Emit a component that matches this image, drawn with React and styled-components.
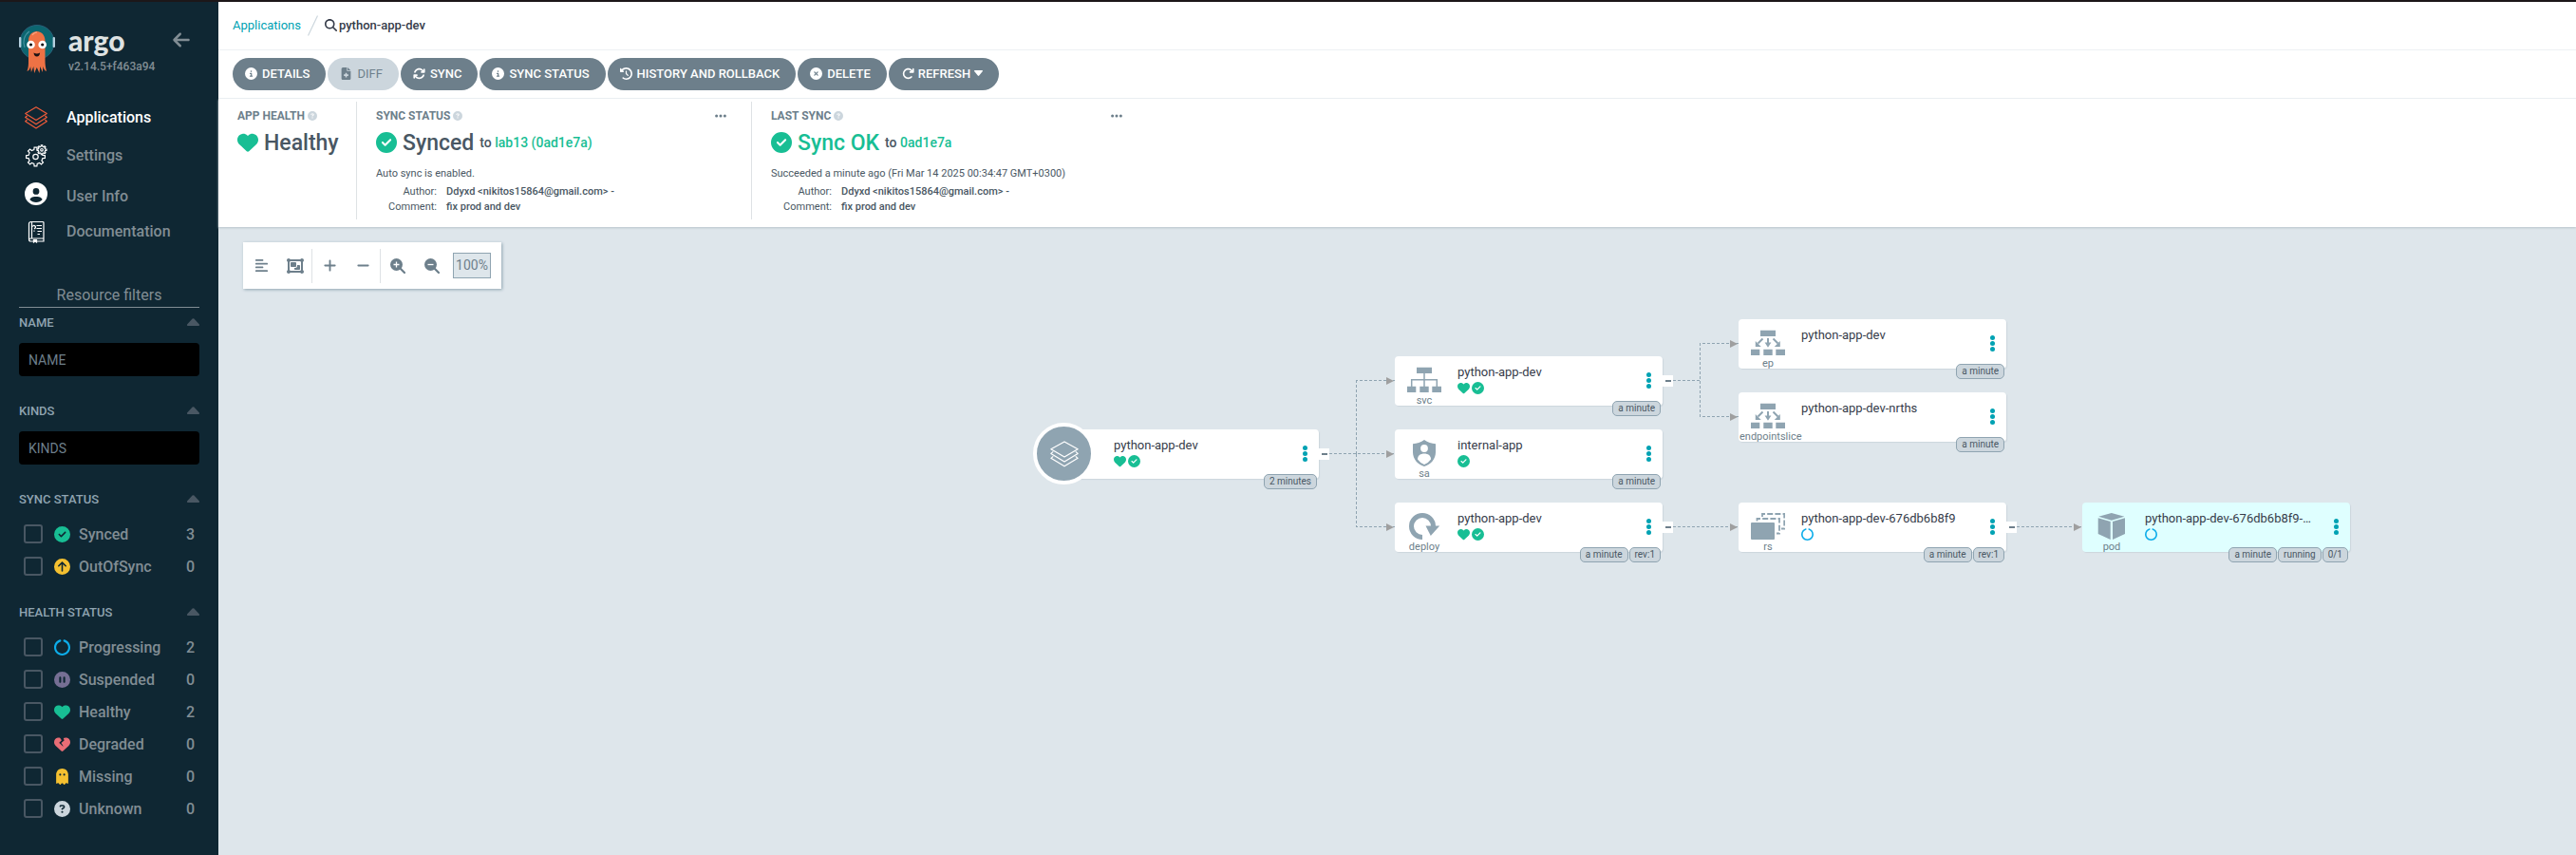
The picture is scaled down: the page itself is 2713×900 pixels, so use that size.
import React from 'react';
import styled, { createGlobalStyle, css } from 'styled-components';
import {
  FaAlignLeft,
  FaArrowLeft,
  FaArrowRotateRight,
  FaArrowsRotate,
  FaCircleArrowUp,
  FaCircleCheck,
  FaCircleInfo,
  FaCircleNotch,
  FaCirclePause,
  FaCircleQuestion,
  FaCircleUser,
  FaCircleXmark,
  FaClockRotateLeft,
  FaEllipsis,
  FaFileMedical,
  FaGhost,
  FaHeart,
  FaHeartCrack,
  FaMagnifyingGlass,
  FaMinus,
  FaObjectGroup,
  FaPlus,
} from 'react-icons/fa6';

const color = {
  navy: '#0f2733',
  canvas: '#dee6eb',
  slate: '#6d7f8b',
  steel: '#8fa4b1',
  mist: '#ccd6dd',
  ink: '#363c4a',
  text: '#495763',
  teal: '#00a2b3',
  green: '#18be94',
  amber: '#f4c030',
  red: '#e96d76',
  blue: '#0dadea',
  purple: '#766f94',
};

const GlobalStyle = createGlobalStyle`
  *, *::before, *::after { box-sizing: border-box; }
  body {
    margin: 0;
    font-family: Roboto, "Liberation Sans", sans-serif;
    font-size: 13px;
    color: ${color.text};
    background: ${color.canvas};
  }
  button { font: inherit; color: inherit; border: 0; padding: 0; background: none; cursor: pointer; }
  a { text-decoration: none; }
  svg { display: block; flex: none; }
`;

const Page = styled.div`
  display: flex;
  min-height: 100vh;
  border-top: 2px solid #1c1719;
`;

/* ---------- Sidebar ---------- */

const Sidebar = styled.aside`
  flex: none;
  width: 230px;
  padding: 0 20px;
  background: ${color.navy};
  color: #818d94;
`;

const Brand = styled.div`
  display: flex;
  align-items: flex-start;
  height: 102px;
  padding-top: 24px;
`;

const BrandText = styled.div`
  flex: 1;
  min-width: 0;
  margin-left: 14px;
`;

const Wordmark = styled.div`
  margin-bottom: 4px;
  font: 900 30px/32px Lato, Roboto, sans-serif;
  color: #dee2e2;
`;

const Version = styled.div`
  font-size: 12px;
  font-weight: 500;
  line-height: 16px;
`;

const CollapseButton = styled.button`
  margin: 6px 9px 0 0;
`;

const Nav = styled.nav`
  margin-bottom: 37px;
`;

const NavLink = styled.a`
  display: flex;
  align-items: ${(p) => (p.$low ? 'flex-end' : 'center')};
  gap: 20px;
  height: 40px;
  padding: 8px 0 8px 6px;
  font-size: 16px;
  line-height: 18px;
  font-weight: 500;
  color: ${(p) => (p.$active ? '#fff' : '#818d94')};

  svg { color: #fff; }
`;

const FiltersTitle = styled.h2`
  margin: 0 0 6px;
  padding-bottom: 2px;
  border-bottom: 1px solid #818d94;
  font-size: 16px;
  font-weight: 400;
  line-height: 20px;
  text-align: center;
`;

const FilterSection = styled.section`
  margin-bottom: ${(p) => (p.$list ? 22 : 27)}px;
`;

const FilterHead = styled.div`
  display: flex;
  align-items: center;
  justify-content: space-between;
  height: 18px;
  margin-bottom: ${(p) => (p.$list ? 11 : 13)}px;
  font-weight: 500;
  color: ${color.steel};
`;

const FilterInput = styled.input`
  display: block;
  width: 100%;
  height: 35px;
  padding: 0 10px;
  border: 0;
  border-radius: 4px;
  background: #000;
  color: #fff;
  font: 400 14px Roboto, sans-serif;

  &::placeholder { color: #6d7f8b; opacity: 1; }
`;

const FilterOption = styled.label`
  display: flex;
  align-items: center;
  height: 34px;
  padding: 0 5px;
  font-size: 16px;
  font-weight: 500;
`;

const Checkbox = styled.input`
  appearance: none;
  width: 20px;
  height: 20px;
  margin: 0 12px 0 0;
  border: 2px solid #495763;
  border-radius: 3px;
`;

const OptionName = styled.span`
  flex: 1;
  margin-left: 9px;
`;

/* ---------- Header ---------- */

const Main = styled.main`
  flex: 1;
  min-width: 0;
  display: flex;
  flex-direction: column;
`;

const TopBar = styled.header`
  display: flex;
  align-items: center;
  height: 51px;
  padding: 0 15px 1px;
  background: #fff;
  border-bottom: 1px solid #edf1f4;
`;

const Crumb = styled.a`
  color: ${color.teal};
`;

const CrumbCurrent = styled.span`
  display: flex;
  align-items: center;
  gap: 2px;
  margin-left: 7px;
  font-weight: 500;
  color: ${color.ink};
`;

const Slash = styled.svg`
  margin-left: 7px;
`;

const Toolbar = styled.div`
  display: flex;
  align-items: center;
  gap: 2px;
  height: 51px;
  padding: 0 15px;
  background: #fff;
  border-bottom: 1px solid #edf1f4;
`;

const ActionButton = styled.button`
  display: flex;
  align-items: center;
  gap: ${(p) => (p.$menu ? 4 : 5)}px;
  height: 34px;
  padding: ${(p) => (p.$menu ? '0 17px 2px 14px' : '0 17px 2px 13px')};
  border-radius: 17px;
  background: ${color.slate};
  color: #fff;
  font-weight: 500;

  &:disabled { background: ${color.mist}; color: ${color.slate}; font-weight: 400; }
`;

const StatusPanel = styled.section`
  position: relative;
  z-index: 1;
  display: flex;
  height: 135px;
  padding: 3px 0 8px;
  background: #fff;
  box-shadow: 0 1px 2px #b7c3cb;
`;

const StatusItem = styled.div`
  width: ${(p) => p.$width}px;
  padding: 6px 25px 0 20px;
  border-right: ${(p) => (p.$last ? '0' : '1px solid #dee2e5')};
`;

const StatusTitle = styled.div`
  display: flex;
  align-items: center;
  gap: 3px;
  height: 18px;
  font-size: 12px;
  font-weight: 700;
  color: ${color.slate};

  svg { color: ${color.mist}; }
`;

const MoreButton = styled.button`
  margin-left: auto;
  svg { color: ${color.slate}; }
`;

const StatusValue = styled.div`
  display: flex;
  align-items: center;
  height: 38px;
  gap: 6px;
  font-size: 23px;
  font-weight: 500;
  color: ${(p) => (p.$ok ? color.green : color.text)};

  svg { color: ${color.green}; }
`;

const Revision = styled.span`
  font-size: 14px;
  color: ${color.text};

  a { color: ${color.green}; }
`;

const StatusNote = styled.div`
  margin-top: 4px;
  font-size: 11px;
  line-height: 20px;
`;

const Commit = styled.dl`
  display: grid;
  grid-template-columns: 64px 1fr;
  column-gap: 10px;
  margin: 1px 0 0;
  font-size: 11px;
  line-height: 16px;

  dt { text-align: right; }
  dd { margin: 0; font-weight: 500; white-space: nowrap; }
`;

/* ---------- Resource graph ---------- */

const Canvas = styled.section`
  position: relative;
  flex: 1;
  min-height: 600px;
  margin-top: -1px;
  background: ${color.canvas};
`;

const GraphTools = styled.div`
  display: inline-flex;
  align-items: center;
  height: 49px;
  margin: 17px 0 0 26px;
  padding: 0 11px 0 1px;
  background: #fff;
  box-shadow: 1px 1px 3px ${color.steel};
  color: ${color.slate};
`;

const ToolButton = styled.button`
  display: flex;
  align-items: center;
  justify-content: center;
  width: 36px;
  height: 36px;
  ${(p) => p.$divided && css`border-right: 1px solid #dee2e5;`}
`;

const ZoomValue = styled.output`
  margin-left: 4px;
  width: 40px;
  height: 27px;
  border: 1px solid ${color.steel};
  background: ${color.canvas};
  font-size: 14px;
  line-height: 24px;
  text-align: center;
`;

const Edges = styled.svg`
  position: absolute;
  left: 0;
  top: 0;
  pointer-events: none;
`;

const Node = styled.article`
  position: absolute;
  left: ${(p) => p.$x}px;
  top: ${(p) => p.$y}px;
  display: flex;
  width: 282px;
  height: 52px;
  border-radius: 4px;
  background: ${(p) => (p.$highlight ? '#dfffff' : '#fff')};
  box-shadow: 1px 1px 1px ${color.mist};
`;

const KindColumn = styled.div`
  width: 60px;
  margin-left: 1px;
  padding-top: 11px;
  font-size: 11px;
  line-height: 13px;
  text-align: center;
  white-space: nowrap;
  color: ${color.slate};
`;

const KindDrawing = styled.svg`
  margin: 0 auto 1px;
  color: ${color.steel};
`;

const RootBadge = styled.div`
  position: absolute;
  left: -19px;
  top: -7px;
  display: flex;
  align-items: center;
  justify-content: center;
  width: 65px;
  height: 65px;
  border: 4px solid #fff;
  border-radius: 50%;
  background: ${color.steel};
  color: #fff;
`;

const NodeBody = styled.div`
  flex: 1;
  min-width: 0;
  margin-left: 5px;
  padding-top: 9px;
`;

const NodeName = styled.div`
  line-height: 16px;
  white-space: nowrap;
  color: ${color.ink};
`;

const NodeStatus = styled.div`
  display: flex;
  gap: 2px;
  margin-top: 2px;
  height: 13px;
`;

const KebabButton = styled.button`
  display: flex;
  flex-direction: column;
  align-items: center;
  gap: 1px;
  width: 29px;
  padding-top: 17px;
`;

const KebabDot = styled.span`
  width: 5px;
  height: 5px;
  border-radius: 50%;
  background: ${color.teal};
`;

const ExpandButton = styled.button`
  position: absolute;
  left: 100%;
  top: 20px;
  display: flex;
  align-items: center;
  justify-content: center;
  width: 11px;
  height: 12px;
  background: #fff;

  &::before {
    content: '';
    width: 6px;
    height: 2px;
    background: ${color.slate};
  }
`;

const Tags = styled.div`
  position: absolute;
  right: 2px;
  top: 47px;
  display: flex;
  gap: 1px;
`;

const Tag = styled.span`
  height: 16px;
  padding: 0 5px;
  border: 1px solid ${color.steel};
  border-radius: 5px;
  background: ${color.mist};
  font-size: 10px;
  line-height: 14px;
  white-space: nowrap;
`;

/* ---------- Drawings ---------- */

const ArgoMascot = () => (
  <svg width="38" height="51" viewBox="0 0 38 51">
    <circle cx="19" cy="18.500" r="18" fill="#0c6670" stroke="#2b5f79" strokeWidth="1" />
    <path d="M6 24a14 14 0 0 1 5-17" fill="none" stroke="#4592a0" strokeWidth="1.200" />
    <rect x="0" y="13" width="2.400" height="11" rx="1" fill="#b5cfdf" />
    <rect x="35.600" y="13" width="2.400" height="11" rx="1" fill="#b5cfdf" />
    <path
      d="M10 17C10 3.500 27.500 3.500 27.500 17V38c0 4 .5 7 1.500 11-2.500-.5-3-3-3.500-5l-.8 6-2.400-6-.8 7-2.700-6-2.700 6-.8-7-2.400 6-.8-6c-.5 2.500-1.500 4.500-3.600 5 1.500-4 1.500-7 1.500-11z"
      fill="#ee7245"
    />
    <path d="M14 11q2-3 5-3" fill="none" stroke="#f7a583" strokeWidth="1.200" />
    <circle cx="12.500" cy="21" r="4.300" fill="#fff" />
    <circle cx="24.700" cy="21" r="4.300" fill="#fff" />
    <circle cx="12.500" cy="21" r="1.600" fill="#111" />
    <circle cx="24.700" cy="21" r="1.600" fill="#111" />
    <path d="M15.500 29.500q3.300 2 6.600 0-.4 4-3.300 4t-3.300-4z" fill="#1c1214" />
  </svg>
);

const LayersIcon = ({ width = 24, height = 24, stroke = 'currentColor', weight = 1.2 }) => (
  <svg width={width} height={height} viewBox="0 0 24 24" fill="none" stroke={stroke} strokeWidth={weight} strokeLinejoin="round" preserveAspectRatio="none">
    <path d="M12 .800 23.300 7.500 12 14.500 .700 7.500z" />
    <path d="M2.600 9.800.700 11.500 12 18.800l11.300-7.300-1.900-1.700" />
    <path d="M2.600 14 .700 15.700 12 23l11.300-7.300L21.400 14" />
  </svg>
);

const gearPath = (cx, cy, outer, inner, teeth) => {
  const step = (Math.PI * 2) / teeth;
  const point = (r, a) => `${(cx + r * Math.cos(a)).toFixed(2)} ${(cy + r * Math.sin(a)).toFixed(2)}`;
  const parts = Array.from({ length: teeth }, (_, i) => {
    const a = i * step;
    return [point(inner, a - step * 0.28), point(outer, a - step * 0.18), point(outer, a + step * 0.18), point(inner, a + step * 0.28)].join('L');
  });
  return `M${parts.join('L')}Z`;
};

const SettingsIcon = () => (
  <svg width="24" height="24" viewBox="0 0 24 24" fill="none" stroke="#fff" strokeWidth="1.200">
    <path d={gearPath(11.5, 13, 10, 7.6, 8)} />
    <circle cx="11.500" cy="13" r="2.700" />
    <path d={gearPath(18, 5.8, 5, 3.7, 8)} fill={color.navy} />
    <circle cx="18" cy="5.800" r="1.300" />
  </svg>
);

const DocsIcon = () => (
  <svg width="24" height="24" viewBox="0 0 24 24" fill="none" stroke="#fff" strokeWidth="1.200">
    <path d="M20 18.500V2.500a1 1 0 0 0-1-1H6.500a2 2 0 0 0-2 2v16.500a2 2 0 0 0 2 2h13.500v-3H6.500a2 2 0 0 0-2 1.500M7.500 2v17" />
    <path d="M12.500 5.500H18M12.500 8.500H18M13.500 11.500H18M13.500 14.500H16" />
    <path d="M8.200 6.500q1.500-2 2.800-.5t-1 3M10 10.500v1.200" />
    <path d="M9.500 20v3l1.500-1 1.500 1v-3" fill="#fff" />
  </svg>
);

const Caret = () => (
  <svg width="13" height="8" viewBox="0 0 13 8" fill="#495763">
    <path d="M1 8a1 1 0 0 1-.7-1.700L5.600.600q.9-.8 1.800 0l5.300 5.700A1 1 0 0 1 12 8z" />
  </svg>
);

const MenuCaret = () => (
  <svg width="9" height="6" viewBox="0 0 9 6" fill="currentColor">
    <path d="M.700 0h7.600q1.200.2.400 1.300L5.200 5.600q-.7.6-1.400 0L.300 1.300Q-.500.200.700 0z" />
  </svg>
);

const LensIcon = ({ plus }) => (
  <svg width="16" height="16" viewBox="0 0 16 16">
    <path d="m10 10 5 5" stroke="currentColor" strokeWidth="2.200" strokeLinecap="round" />
    <circle cx="6.500" cy="6.500" r="6.500" fill="currentColor" />
    <path d={plus ? 'M3.500 6.500h6M6.500 3.500v6' : 'M3.500 6.500h6'} stroke="#fff" strokeWidth="1.300" />
  </svg>
);

const kindDrawings = {
  svc: (
    <>
      <path d="M10 .700h16V7H10zM0 20.700h9.300V27H0zM13.300 20.700h9.400V27h-9.400zM26.300 20.700H36V27h-9.700z" />
      <path d="M18 7v14M4.700 21v-7.300h26.600V21" fill="none" stroke="currentColor" strokeWidth="1.500" />
    </>
  ),
  ep: (
    <>
      <path d="M10 .700h16V7H10zM0 20.700h9.300V27H0zM13.300 20.700h9.400V27h-9.400zM26.300 20.700H36V27h-9.700z" />
      <path d="m12.500 9.500-5 5M18 9v6M23.500 9.500l5 5" fill="none" stroke="currentColor" strokeWidth="2" />
      <path d="M4.800 18V12l6 6zM14.600 13.500h6.800L18 18.700zM30.800 18V12l-6 6z" />
    </>
  ),
  sa: (
    <>
      <path d="M18 0q5.500 3.800 12 4.300V13c0 7-5 13-12 15C11 26 6 20 6 13V4.300Q12.500 3.800 18 0z" />
      <circle cx="18" cy="9" r="3.900" fill="#fff" />
      <path d="M11 20.500c0-4 3-6 7-6s7 2 7 6q-3 4.300-7 5.500-4-1.200-7-5.500z" fill="#fff" />
    </>
  ),
  deploy: (
    <>
      <path d="M16 25.500A11.500 11.500 0 1 1 27.500 14" fill="none" stroke="currentColor" strokeWidth="5" />
      <path d="M19.500 13.500h14.700L24.800 24z" />
    </>
  ),
  rs: (
    <>
      <rect y="10" width="25" height="18" rx="1" />
      <g fill="none" stroke="currentColor" strokeWidth="1.800" strokeDasharray="6 2.200">
        <path d="M6.500 8.500V6H30v15.500h-3" />
        <path d="M12 4V1h23.200v15.500H32" />
      </g>
    </>
  ),
  pod: <path d="m17.800 0 13.600 3.700-13.600 4L4.200 3.700zM3.700 5.300l13 3.700v19l-13-6zM32 5.300 19 9v19l13-6z" />,
};
kindDrawings.endpointslice = kindDrawings.ep;

const KindIcon = ({ kind }) => (
  <KindDrawing width="36" height="28" viewBox="0 0 36 28" fill="currentColor">
    {kindDrawings[kind]}
  </KindDrawing>
);

const statusIcons = {
  healthy: <FaHeart size={13} color={color.green} />,
  synced: <FaCircleCheck size={13} color={color.green} />,
  progressing: <FaCircleNotch size={13} color={color.blue} />,
};

/* ---------- Data ---------- */

const syncFilters = [
  ['Synced', 3, <FaCircleCheck size={17} color={color.green} />],
  ['OutOfSync', 0, <FaCircleArrowUp size={17} color={color.amber} />],
];

const healthFilters = [
  ['Progressing', 2, <FaCircleNotch size={17} color={color.blue} />],
  ['Suspended', 0, <FaCirclePause size={17} color={color.purple} />],
  ['Healthy', 2, <FaHeart size={17} color={color.green} />],
  ['Degraded', 0, <FaHeartCrack size={17} color={color.red} />],
  ['Missing', 0, <FaGhost size={17} color={color.amber} />],
  ['Unknown', 0, <FaCircleQuestion size={17} color={color.mist} />],
];

const actions = [
  ['DETAILS', FaCircleInfo],
  ['DIFF', FaFileMedical, true],
  ['SYNC', FaArrowsRotate],
  ['SYNC STATUS', FaCircleInfo],
  ['HISTORY AND ROLLBACK', FaClockRotateLeft],
  ['DELETE', FaCircleXmark],
];

const nodes = [
  { x: 877, y: 214, root: true, name: 'python-app-dev', status: ['healthy', 'synced'], tags: ['2 minutes'], expand: true },
  { x: 1239, y: 137, kind: 'svc', name: 'python-app-dev', status: ['healthy', 'synced'], tags: ['a minute'], expand: true },
  { x: 1239, y: 214, kind: 'sa', name: 'internal-app', status: ['synced'], tags: ['a minute'] },
  { x: 1239, y: 291, kind: 'deploy', name: 'python-app-dev', status: ['healthy', 'synced'], tags: ['a minute', 'rev:1'], expand: true },
  { x: 1601, y: 98, kind: 'ep', name: 'python-app-dev', status: [], tags: ['a minute'] },
  { x: 1601, y: 175, kind: 'endpointslice', name: 'python-app-dev-nrths', status: [], tags: ['a minute'] },
  { x: 1601, y: 291, kind: 'rs', name: 'python-app-dev-676db6b8f9', status: ['progressing'], tags: ['a minute', 'rev:1'], expand: true },
  { x: 1963, y: 291, kind: 'pod', name: 'python-app-dev-676db6b8f9-…', status: ['progressing'], tags: ['a minute', 'running', '0/1'], highlight: true },
];

const edges = [
  'M1170 239.500H1239',
  'M1198.500 239.500V162.500H1239',
  'M1198.500 239.500V316.500H1239',
  'M1532 162.500H1560.500V123.500H1601',
  'M1560.500 162.500V200.500H1601',
  'M1532 316.500H1601',
  'M1894 316.500H1963',
];

const arrows = [
  [1238, 163], [1238, 240], [1238, 317], [1600, 124], [1600, 201], [1600, 317], [1962, 317],
];

/* ---------- Parts ---------- */

const TextFilter = ({ label }) => (
  <FilterSection>
    <FilterHead>
      <label htmlFor={`filter-${label}`}>{label}</label>
      <button type="button" aria-label={`Collapse ${label}`}><Caret /></button>
    </FilterHead>
    <FilterInput id={`filter-${label}`} placeholder={label} />
  </FilterSection>
);

const ListFilter = ({ label, options }) => (
  <FilterSection $list>
    <FilterHead $list>
      <span>{label}</span>
      <button type="button" aria-label={`Collapse ${label}`}><Caret /></button>
    </FilterHead>
    {options.map(([name, count, icon]) => (
      <FilterOption key={name}>
        <Checkbox type="checkbox" />
        {icon}
        <OptionName>{name}</OptionName>
        <span>{count}</span>
      </FilterOption>
    ))}
  </FilterSection>
);

const CommitInfo = () => (
  <Commit>
    <dt>Author:</dt>
    <dd>Ddyxd &lt;nikitos15864@gmail.com&gt; -</dd>
    <dt>Comment:</dt>
    <dd>fix prod and dev</dd>
  </Commit>
);

const ResourceNode = ({ node }) => (
  <Node $x={node.x} $y={node.y} $highlight={node.highlight}>
    <KindColumn>
      {node.root ? (
        <RootBadge><LayersIcon width={30} height={28} weight={1} /></RootBadge>
      ) : (
        <>
          <KindIcon kind={node.kind} />
          {node.kind}
        </>
      )}
    </KindColumn>
    <NodeBody>
      <NodeName>{node.name}</NodeName>
      <NodeStatus>
        {node.status.map((s) => <React.Fragment key={s}>{statusIcons[s]}</React.Fragment>)}
      </NodeStatus>
    </NodeBody>
    <KebabButton type="button" aria-label="Resource actions">
      <KebabDot /><KebabDot /><KebabDot />
    </KebabButton>
    {node.expand && <ExpandButton type="button" aria-label="Collapse children" />}
    <Tags>
      {node.tags.map((t) => <Tag key={t}>{t}</Tag>)}
    </Tags>
  </Node>
);

export default function App() {
  return (
    <>
      <GlobalStyle />
      <Page>
        <Sidebar>
          <Brand>
            <ArgoMascot />
            <BrandText>
              <Wordmark>argo</Wordmark>
              <Version>v2.14.5+f463a94</Version>
            </BrandText>
            <CollapseButton type="button" aria-label="Collapse sidebar"><FaArrowLeft size={20} /></CollapseButton>
          </Brand>
          <Nav>
            <NavLink href="#applications" $active><LayersIcon stroke="#ee5b3a" />Applications</NavLink>
            <NavLink href="#settings"><SettingsIcon />Settings</NavLink>
            <NavLink href="#user-info" $low><FaCircleUser size={24} />User Info</NavLink>
            <NavLink href="#docs"><DocsIcon />Documentation</NavLink>
          </Nav>
          <FiltersTitle>Resource filters</FiltersTitle>
          <TextFilter label="NAME" />
          <TextFilter label="KINDS" />
          <ListFilter label="SYNC STATUS" options={syncFilters} />
          <ListFilter label="HEALTH STATUS" options={healthFilters} />
        </Sidebar>

        <Main>
          <TopBar>
            <Crumb href="#applications">Applications</Crumb>
            <Slash width="11" height="22" viewBox="0 0 11 22" stroke={color.mist} strokeWidth="1.200">
              <path d="M.500 21.500 10.500.500" />
            </Slash>
            <CrumbCurrent><FaMagnifyingGlass size={13} />python-app-dev</CrumbCurrent>
          </TopBar>
          <Toolbar>
            {actions.map(([label, Icon, disabled]) => (
              <ActionButton key={label} type="button" disabled={disabled}>
                <Icon size={13} />{label}
              </ActionButton>
            ))}
            <ActionButton type="button" $menu>
              <FaArrowRotateRight size={13} />REFRESH<MenuCaret />
            </ActionButton>
          </Toolbar>
          <StatusPanel>
            <StatusItem $width={146}>
              <StatusTitle>APP HEALTH<FaCircleQuestion size={10} /></StatusTitle>
              <StatusValue><FaHeart size={22} />Healthy</StatusValue>
            </StatusItem>
            <StatusItem $width={416}>
              <StatusTitle>
                SYNC STATUS<FaCircleQuestion size={10} />
                <MoreButton type="button" aria-label="Sync status actions"><FaEllipsis size={14} /></MoreButton>
              </StatusTitle>
              <StatusValue>
                <FaCircleCheck size={22} />Synced
                <Revision>to <a href="#lab13">lab13 (0ad1e7a)</a></Revision>
              </StatusValue>
              <StatusNote>Auto sync is enabled.</StatusNote>
              <CommitInfo />
            </StatusItem>
            <StatusItem $width={416} $last>
              <StatusTitle>
                LAST SYNC<FaCircleQuestion size={10} />
                <MoreButton type="button" aria-label="Last sync actions"><FaEllipsis size={14} /></MoreButton>
              </StatusTitle>
              <StatusValue $ok>
                <FaCircleCheck size={22} />Sync OK
                <Revision>to <a href="#0ad1e7a">0ad1e7a</a></Revision>
              </StatusValue>
              <StatusNote>Succeeded a minute ago (Fri Mar 14 2025 00:34:47 GMT+0300)</StatusNote>
              <CommitInfo />
            </StatusItem>
          </StatusPanel>

          <Canvas>
            <Edges width="2000" height="400" viewBox="0 0 2000 400">
              <g fill="none" stroke={color.steel} strokeDasharray="3 2" shapeRendering="crispEdges">
                {edges.map((d) => <path key={d} d={d} />)}
              </g>
              {arrows.map(([x, y]) => (
                <path key={`${x}-${y}`} d={`M${x} ${y}l-8-4v8z`} fill="#9f9f9f" />
              ))}
            </Edges>
            <GraphTools>
              <ToolButton type="button" aria-label="Align left"><FaAlignLeft size={15} /></ToolButton>
              <ToolButton type="button" aria-label="Group nodes" $divided><FaObjectGroup size={18} /></ToolButton>
              <ToolButton type="button" aria-label="Expand all"><FaPlus size={15} /></ToolButton>
              <ToolButton type="button" aria-label="Collapse all" $divided><FaMinus size={15} /></ToolButton>
              <ToolButton type="button" aria-label="Zoom in"><LensIcon plus /></ToolButton>
              <ToolButton type="button" aria-label="Zoom out"><LensIcon /></ToolButton>
              <ZoomValue>100%</ZoomValue>
            </GraphTools>
            {nodes.map((node) => <ResourceNode key={`${node.x}-${node.y}`} node={node} />)}
          </Canvas>
        </Main>
      </Page>
    </>
  );
}
